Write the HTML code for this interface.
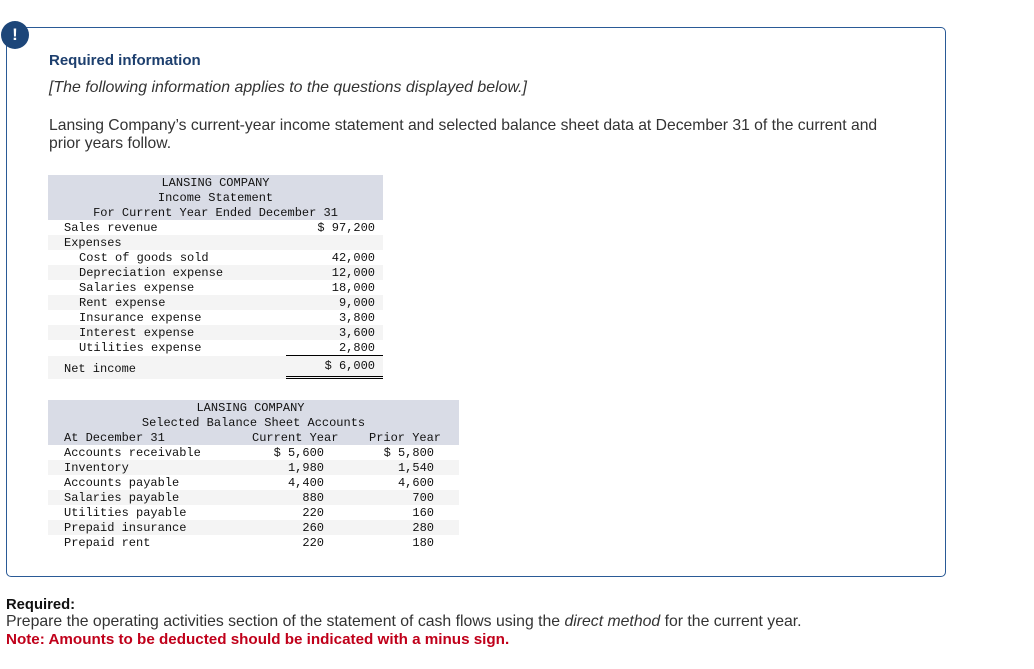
<!DOCTYPE html>
<html><head><meta charset="utf-8"><style>
body{margin:0;width:1034px;height:669px;background:#fff;position:relative;overflow:hidden;font-family:"Liberation Sans",sans-serif;color:#222}
.a{position:absolute;white-space:nowrap}
.box{position:absolute;left:6px;top:27px;width:938px;height:548px;border:1px solid #2a5a96;border-radius:5px}
.ic{position:absolute;left:1px;top:21px;width:28px;height:28px;border-radius:50%;background:#1d4679;color:#fff;font-weight:bold;font-size:17px;text-align:center;line-height:28px}
.m{font-family:"Liberation Mono","DejaVu Sans Mono",monospace;font-size:12px;color:#111}
.r{position:absolute;height:15px;line-height:17px}
.g{background:#f4f4f4}
.h{background:#d9dce6}
.ra{position:absolute;text-align:right}
</style></head><body>
<div class="box"></div>
<div class="ic">!</div>
<div class="a" style="left:49px;top:52px;font-size:15px;font-weight:bold;color:#1d3f6e">Required information</div>
<div class="a" style="left:49px;top:79px;font-size:15.9px;font-style:italic;color:#333">[The following information applies to the questions displayed below.]</div>
<div class="a" style="left:49px;top:117px;font-size:15.7px;line-height:18px;color:#333">Lansing Company’s current-year income statement and selected balance sheet data at December 31 of the current and<br>prior years follow.</div>

<div class="m">
<div class="r h" style="left:48px;top:175px;width:335px;height:45px"></div>
<div class="a" style="left:48px;width:335px;top:176px;line-height:15px;text-align:center">
<div>LANSING COMPANY<br>Income Statement<br>For Current Year Ended December 31</div></div>
<div class="r" style="left:48px;top:220px;width:335px"><span class="a" style="left:16px">Sales revenue</span><span class="ra" style="right:8px">$ 97,200</span></div>
<div class="r g" style="left:48px;top:235px;width:335px"><span class="a" style="left:16px">Expenses</span></div>
<div class="r" style="left:48px;top:250px;width:335px"><span class="a" style="left:31px">Cost of goods sold</span><span class="ra" style="right:8px">42,000</span></div>
<div class="r g" style="left:48px;top:265px;width:335px"><span class="a" style="left:31px">Depreciation expense</span><span class="ra" style="right:8px">12,000</span></div>
<div class="r" style="left:48px;top:280px;width:335px"><span class="a" style="left:31px">Salaries expense</span><span class="ra" style="right:8px">18,000</span></div>
<div class="r g" style="left:48px;top:295px;width:335px"><span class="a" style="left:31px">Rent expense</span><span class="ra" style="right:8px">9,000</span></div>
<div class="r" style="left:48px;top:310px;width:335px"><span class="a" style="left:31px">Insurance expense</span><span class="ra" style="right:8px">3,800</span></div>
<div class="r g" style="left:48px;top:325px;width:335px"><span class="a" style="left:31px">Interest expense</span><span class="ra" style="right:8px">3,600</span></div>
<div class="r" style="left:48px;top:340px;width:335px"><span class="a" style="left:31px">Utilities expense</span><span class="ra" style="right:8px">2,800</span></div>
<div class="r g" style="left:48px;top:356px;width:335px;height:23px;line-height:26px"><span class="a" style="left:16px">Net income</span><span class="ra" style="right:8px;line-height:21px">$ 6,000</span></div>
<div class="a" style="left:286px;top:355px;width:97px;border-top:1px solid #000"></div>
<div class="a" style="left:286px;top:376px;width:97px;height:1px;border-top:1px solid #000;border-bottom:1px solid #000"></div>

<div class="r h" style="left:48px;top:400px;width:411px;height:45px"></div>
<div class="a" style="left:48px;width:411px;top:401px;line-height:15px;text-align:center">
<div style="margin-right:6px">LANSING COMPANY</div><div>Selected Balance Sheet Accounts</div></div>
<div class="r" style="left:48px;top:430px;width:411px"><span class="a" style="left:16px">At December 31</span><span class="a" style="left:204px">Current Year</span><span class="a" style="left:321px">Prior Year</span></div>
<div class="r" style="left:48px;top:445px;width:411px"><span class="a" style="left:16px">Accounts receivable</span><span class="ra" style="right:135px">$ 5,600</span><span class="ra" style="right:25px">$ 5,800</span></div>
<div class="r g" style="left:48px;top:460px;width:411px"><span class="a" style="left:16px">Inventory</span><span class="ra" style="right:135px">1,980</span><span class="ra" style="right:25px">1,540</span></div>
<div class="r" style="left:48px;top:475px;width:411px"><span class="a" style="left:16px">Accounts payable</span><span class="ra" style="right:135px">4,400</span><span class="ra" style="right:25px">4,600</span></div>
<div class="r g" style="left:48px;top:490px;width:411px"><span class="a" style="left:16px">Salaries payable</span><span class="ra" style="right:135px">880</span><span class="ra" style="right:25px">700</span></div>
<div class="r" style="left:48px;top:505px;width:411px"><span class="a" style="left:16px">Utilities payable</span><span class="ra" style="right:135px">220</span><span class="ra" style="right:25px">160</span></div>
<div class="r g" style="left:48px;top:520px;width:411px"><span class="a" style="left:16px">Prepaid insurance</span><span class="ra" style="right:135px">260</span><span class="ra" style="right:25px">280</span></div>
<div class="r" style="left:48px;top:535px;width:411px"><span class="a" style="left:16px">Prepaid rent</span><span class="ra" style="right:135px">220</span><span class="ra" style="right:25px">180</span></div>
</div>

<div class="a" style="left:6px;top:597px;font-size:14.8px;font-weight:bold;color:#111">Required:</div>
<div class="a" style="left:6px;top:613px;font-size:15.8px;color:#333">Prepare the operating activities section of the statement of cash flows using the <i>direct method</i> for the current year.</div>
<div class="a" style="left:6px;top:631px;font-size:15.2px;font-weight:bold;color:#c0001a">Note: Amounts to be deducted should be indicated with a minus sign.</div>
</body></html>
